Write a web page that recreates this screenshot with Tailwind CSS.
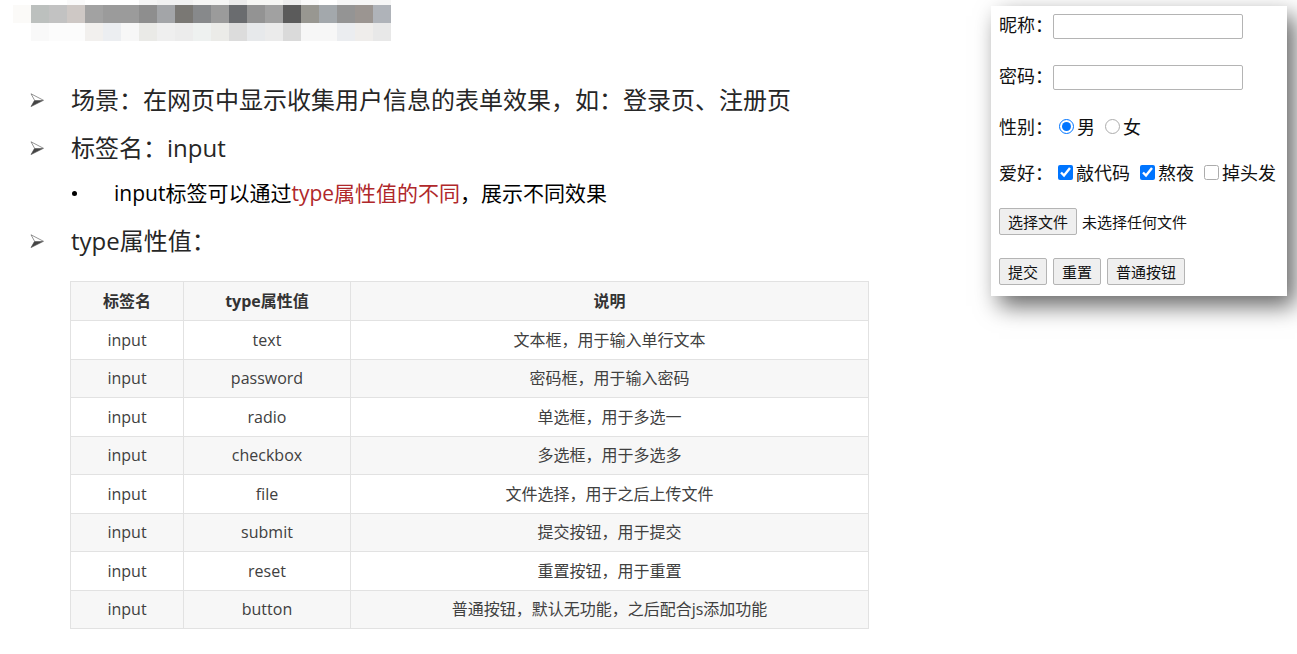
<!DOCTYPE html>
<html lang="zh-CN">
<head>
    <meta charset="UTF-8">
    <meta name="viewport" content="width=device-width, initial-scale=1.0">
    <title>input 标签</title>
    <script src="https://cdn.jsdelivr.net/npm/@tailwindcss/browser@4"></script>
</head>
<body class="bg-white font-['Open_Sans','Noto_Sans_CJK_SC',sans-serif] text-[#262626]">
    <div class="flex items-start justify-between gap-8 pr-[10px]">
        <main class="min-w-0 flex-1">
            <!-- Pixelated title -->
            <svg class="ml-[13px] h-[41px] w-[378px]" viewBox="0 0 378 41" shape-rendering="crispEdges" aria-hidden="true">
                <g>
                    <rect x="54" width="18" height="5" fill="#fafafa"/>
                    <rect x="126" width="18" height="5" fill="#f5f5f5"/>
                    <rect x="144" width="36" height="5" fill="#f1f1f1"/>
                    <rect x="180" width="36" height="5" fill="#f6f6f5"/>
                    <rect x="216" width="18" height="5" fill="#ebebeb"/>
                    <rect x="234" width="36" height="5" fill="#f6f6f4"/>
                    <rect x="270" width="18" height="5" fill="#ededed"/>
                    <rect x="288" width="18" height="5" fill="#fafafa"/>
                    <rect x="324" width="54" height="5" fill="#f6f6f6"/>
                </g>
                <g>
                    <rect x="0" y="5" width="18" height="18" fill="#fbfaf8"/>
                    <rect x="18" y="5" width="18" height="18" fill="#bcc0be"/>
                    <rect x="36" y="5" width="18" height="18" fill="#c2c2c2"/>
                    <rect x="54" y="5" width="18" height="18" fill="#cec8c5"/>
                    <rect x="72" y="5" width="18" height="18" fill="#a2a2a2"/>
                    <rect x="90" y="5" width="36" height="18" fill="#9b9b9b"/>
                    <rect x="126" y="5" width="18" height="18" fill="#8e8e8e"/>
                    <rect x="144" y="5" width="18" height="18" fill="#a3a5a8"/>
                    <rect x="162" y="5" width="18" height="18" fill="#7a7874"/>
                    <rect x="180" y="5" width="18" height="18" fill="#87898b"/>
                    <rect x="198" y="5" width="18" height="18" fill="#9b9b9b"/>
                    <rect x="216" y="5" width="18" height="18" fill="#6a6c6f"/>
                    <rect x="234" y="5" width="18" height="18" fill="#939393"/>
                    <rect x="252" y="5" width="18" height="18" fill="#a1a1a1"/>
                    <rect x="270" y="5" width="18" height="18" fill="#5b5b5b"/>
                    <rect x="288" y="5" width="18" height="18" fill="#989791"/>
                    <rect x="306" y="5" width="18" height="18" fill="#a3a8ac"/>
                    <rect x="324" y="5" width="18" height="18" fill="#949494"/>
                    <rect x="342" y="5" width="18" height="18" fill="#9b9591"/>
                    <rect x="360" y="5" width="18" height="18" fill="#afb3b9"/>
                </g>
                <g>
                    <rect x="18" y="23" width="18" height="18" fill="#f9f9f9"/>
                    <rect x="36" y="23" width="36" height="18" fill="#fcfcfc"/>
                    <rect x="72" y="23" width="18" height="18" fill="#f2f0ee"/>
                    <rect x="90" y="23" width="18" height="18" fill="#eceef1"/>
                    <rect x="108" y="23" width="18" height="18" fill="#f7f7f7"/>
                    <rect x="126" y="23" width="18" height="18" fill="#eaeae7"/>
                    <rect x="144" y="23" width="18" height="18" fill="#efefef"/>
                    <rect x="162" y="23" width="18" height="18" fill="#ececec"/>
                    <rect x="180" y="23" width="18" height="18" fill="#eef1f0"/>
                    <rect x="198" y="23" width="18" height="18" fill="#ebebe8"/>
                    <rect x="216" y="23" width="18" height="18" fill="#dcdcdc"/>
                    <rect x="234" y="23" width="18" height="18" fill="#e7e9eb"/>
                    <rect x="252" y="23" width="18" height="18" fill="#ebebeb"/>
                    <rect x="270" y="23" width="18" height="18" fill="#dadada"/>
                    <rect x="288" y="23" width="36" height="18" fill="#f7f7f7"/>
                    <rect x="324" y="23" width="18" height="18" fill="#ebedf0"/>
                    <rect x="342" y="23" width="18" height="18" fill="#efedeb"/>
                    <rect x="360" y="23" width="18" height="18" fill="#e8e8e8"/>
                </g>
            </svg>

            <!-- Arrow shared by the list items -->
            <svg class="hidden">
                <symbol id="arrow" viewBox="0 0 14 14">
                    <path d="M1 0.8 L13.5 7.3 L1 13.6 L4.6 7.3 Z" fill="none" stroke="#666" stroke-width="0.7"/>
                    <path d="M4.6 7.3 H13.5 L1 13.6 Z" fill="#444"/>
                </symbol>
            </svg>

            <ul class="mt-[35px] pl-[30px] text-2xl leading-[48px]">
                <li class="flex items-center gap-[27px]">
                    <svg class="size-[14px] shrink-0" aria-hidden="true"><use href="#arrow"/></svg>
                    <span>场景：在网页中显示收集用户信息的表单效果，如：登录页、注册页</span>
                </li>
                <li>
                    <div class="flex items-center gap-[27px]">
                        <svg class="size-[14px] shrink-0" aria-hidden="true"><use href="#arrow"/></svg>
                        <span>标签名：input</span>
                    </div>
                    <ul class="mb-[3px] pl-[42px] text-[21px] leading-[42px] text-black">
                        <li class="flex items-center gap-[37px]">
                            <span class="size-[5px] rounded-full bg-black" aria-hidden="true"></span>
                            <span>input标签可以通过<span class="text-[#b0282b]">type属性值的不同</span>，展示不同效果</span>
                        </li>
                    </ul>
                </li>
                <li class="flex items-center gap-[27px]">
                    <svg class="size-[14px] shrink-0" aria-hidden="true"><use href="#arrow"/></svg>
                    <span>type属性值：</span>
                </li>
            </ul>

            <div class="mt-4 mb-6 max-w-[869px] pl-[70px]">
                <table class="h-[348px] w-full table-fixed border-collapse text-center text-base leading-6 text-[#404040] [&_td]:border [&_td]:border-[#e2e2e2] [&_th]:border [&_th]:border-[#e2e2e2]">
                    <thead>
                        <tr class="h-[39px] bg-[#f7f7f7] text-[#333]">
                            <th class="w-[113px]">标签名</th>
                            <th class="w-[167px]">type属性值</th>
                            <th>说明</th>
                        </tr>
                    </thead>
                    <tbody>
                        <tr class="even:bg-[#f7f7f7]"><td>input</td><td>text</td><td>文本框，用于输入单行文本</td></tr>
                        <tr class="even:bg-[#f7f7f7]"><td>input</td><td>password</td><td>密码框，用于输入密码</td></tr>
                        <tr class="even:bg-[#f7f7f7]"><td>input</td><td>radio</td><td>单选框，用于多选一</td></tr>
                        <tr class="even:bg-[#f7f7f7]"><td>input</td><td>checkbox</td><td>多选框，用于多选多</td></tr>
                        <tr class="even:bg-[#f7f7f7]"><td>input</td><td>file</td><td>文件选择，用于之后上传文件</td></tr>
                        <tr class="even:bg-[#f7f7f7]"><td>input</td><td>submit</td><td>提交按钮，用于提交</td></tr>
                        <tr class="even:bg-[#f7f7f7]"><td>input</td><td>reset</td><td>重置按钮，用于重置</td></tr>
                        <tr class="even:bg-[#f7f7f7]"><td>input</td><td>button</td><td>普通按钮，默认无功能，之后配合js添加功能</td></tr>
                    </tbody>
                </table>
            </div>
        </main>

        <!-- Form preview -->
        <form class="mt-[6px] flex w-[296px] shrink-0 flex-col gap-[26px] bg-white px-2 pt-2 pb-[11px] font-['Noto_Sans_CJK_SC',sans-serif] text-lg leading-5 text-[#111] shadow-[8px_10px_22px_rgb(0_0_0/0.6)]" onsubmit="return false">
            <div class="flex items-start">
                <label for="nick">昵称：</label>
                <input id="nick" type="text" class="h-[25px] w-[190px] rounded-xs border border-[#b4b4b4] px-1 text-[15px]">
            </div>
            <div class="flex items-start">
                <label for="pwd">密码：</label>
                <input id="pwd" type="password" class="h-[25px] w-[190px] rounded-xs border border-[#b4b4b4] px-1 text-[15px]">
            </div>
            <div class="flex items-center gap-[6px]" role="radiogroup" aria-label="性别">
                <span>性别：</span>
                <div class="flex items-center gap-[10px]">
                    <label class="flex items-center gap-[3px]"><input type="radio" name="sex" checked class="size-[15px] accent-[#0075ff]">男</label>
                    <label class="flex items-center gap-[3px]"><input type="radio" name="sex" class="size-[15px] opacity-60 accent-[#0075ff] checked:opacity-100">女</label>
                </div>
            </div>
            <div class="flex items-center gap-[5px]" role="group" aria-label="爱好">
                <span>爱好：</span>
                <div class="flex items-center gap-[10px]">
                    <label class="flex items-center gap-[3px]"><input type="checkbox" checked class="size-[15px] accent-[#0075ff]">敲代码</label>
                    <label class="flex items-center gap-[3px]"><input type="checkbox" checked class="size-[15px] accent-[#0075ff]">熬夜</label>
                    <label class="flex items-center gap-[3px]"><input type="checkbox" class="size-[15px] opacity-60 accent-[#0075ff] checked:opacity-100">掉头发</label>
                </div>
            </div>
            <div class="flex flex-col gap-[23px] text-[15px]">
                <div class="flex items-center gap-[5px]">
                    <input id="file" type="file" class="hidden" aria-label="选择文件">
                    <button type="button" onclick="document.getElementById('file').click()" class="h-[27px] rounded-xs border border-[#b4b4b4] bg-[#efefef] px-2">选择文件</button>
                    <span>未选择任何文件</span>
                </div>
                <div class="flex items-center gap-[6px]">
                    <button type="submit" class="h-[27px] rounded-xs border border-[#b4b4b4] bg-[#efefef] px-2">提交</button>
                    <button type="reset" class="h-[27px] rounded-xs border border-[#b4b4b4] bg-[#efefef] px-2">重置</button>
                    <button type="button" class="h-[27px] rounded-xs border border-[#b4b4b4] bg-[#efefef] px-2">普通按钮</button>
                </div>
            </div>
        </form>
    </div>
</body>
</html>
